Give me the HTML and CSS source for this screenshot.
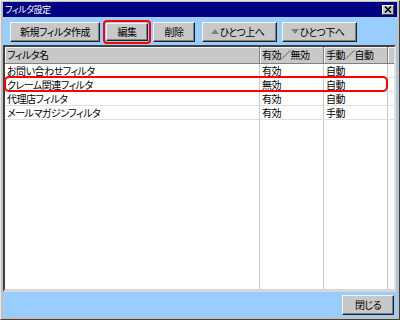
FILE: index.html
```html
<!DOCTYPE html>
<html lang="ja">
<head>
<meta charset="utf-8">
<title>フィルタ設定</title>
<link rel="stylesheet" href="styles.css">
</head>
<body>
<div class="window">
  <div class="titlebar">
    <span class="title">フィルタ設定</span>
    <span class="close-x"><svg width="8" height="7" viewBox="0 0 8 7"><path d="M1 0.5 L7 6.5 M7 0.5 L1 6.5" stroke="#000" stroke-width="1.6"/></svg></span>
  </div>
  <div class="content">
    <div class="toolbar">
      <button class="btn btn-new">新規フィルタ作成</button>
      <span class="mark"><button class="btn btn-edit">編集</button></span>
      <button class="btn btn-del">削除</button>
      <button class="btn btn-move btn-up"><span class="tri tri-up"></span>ひとつ上へ</button>
      <button class="btn btn-move btn-down"><span class="tri tri-down"></span>ひとつ下へ</button>
    </div>
    <div class="list">
      <div class="grid">
        <div class="hcell">フィルタ名</div>
        <div class="hcell">有効／無効</div>
        <div class="hcell">手動／自動</div>
        <div class="hcell hlast"></div>

        <div class="cell">お問い合わせフィルタ</div>
        <div class="cell">有効</div>
        <div class="cell">自動</div>
        <div class="cell clast"></div>

        <div class="cell">クレーム関連フィルタ</div>
        <div class="cell">無効</div>
        <div class="cell">自動</div>
        <div class="cell clast"></div>

        <div class="cell">代理店フィルタ</div>
        <div class="cell">有効</div>
        <div class="cell">自動</div>
        <div class="cell clast"></div>

        <div class="cell">メールマガジンフィルタ</div>
        <div class="cell">有効</div>
        <div class="cell">手動</div>
        <div class="cell clast"></div>

        <div class="fill"></div>
        <div class="fill"></div>
        <div class="fill"></div>
        <div class="fill clast"></div>
      </div>
      <div class="row-mark"></div>
    </div>
    <div class="footer">
      <button class="btn btn-close">閉じる</button>
    </div>
  </div>
</div>
</body>
</html>
```

FILE: styles.css
```css
html, body {
  margin: 0;
  padding: 0;
  background: #c0c0c0;
}

body {
  font-family: "Noto Sans CJK JP", "Noto Sans", sans-serif;
  font-size: 10px;
  font-feature-settings: "palt";
  letter-spacing: -0.5px;
  color: #000;
}

.window {
  width: 400px;
  height: 320px;
  box-sizing: border-box;
  background: #c0c0c0;
  border: 1px solid;
  border-color: #e8e8e8 #404040 #404040 #e8e8e8;
  padding: 1px 2px 2px 2px;
  display: flex;
  flex-direction: column;
}

.titlebar {
  height: 15px;
  background: #000080;
  display: flex;
  align-items: center;
  justify-content: space-between;
  padding: 0 3px 0 2px;
  flex: none;
}

.title {
  color: #fff;
  font-size: 9px;
  line-height: 15px;
}

.close-x {
  width: 10px;
  height: 8px;
  background: #c8c8c8;
  border: 1px solid;
  border-color: #fff #404040 #404040 #fff;
  display: flex;
  align-items: center;
  justify-content: center;
}

.close-x svg {
  display: block;
}

.content {
  flex: 1;
  background: #99ccff;
  display: flex;
  flex-direction: column;
  min-height: 0;
}

.toolbar {
  height: 28px;
  display: flex;
  align-items: center;
  padding: 1px 0 0 7px;
  box-sizing: border-box;
  flex: none;
}

.btn {
  font-family: "Noto Sans CJK JP", "Noto Sans", sans-serif;
  font-size: 10px;
  font-feature-settings: "palt";
  letter-spacing: -0.5px;
  color: #000;
  background: #c8c8c8;
  border: 1px solid;
  border-color: #f4f4f4 #202020 #202020 #f4f4f4;
  box-shadow: inset -1px -1px 0 #808080;
  padding: 0;
  margin: 0;
  height: 20px;
  display: flex;
  align-items: center;
  justify-content: center;
  box-sizing: border-box;
  line-height: 1;
}

.btn-new {
  width: 90px;
}

.mark {
  display: flex;
  border: 2px solid #ff0000;
  border-radius: 4px;
  padding: 1px;
  margin-left: 3px;
}

.btn-edit {
  width: 42px;
  height: 18px;
}

.btn-del {
  width: 42px;
  margin-left: 2px;
}

.btn-move {
  width: 75px;
  padding-right: 4px;
}

.btn-up {
  margin-left: 7px;
}

.btn-down {
  margin-left: 5px;
}

.tri {
  width: 0;
  height: 0;
  border-left: 4px solid transparent;
  border-right: 4px solid transparent;
  margin-right: 1px;
}

.tri-up {
  border-bottom: 5px solid #808080;
}

.tri-down {
  border-top: 5px solid #808080;
}

.list {
  flex: 1;
  position: relative;
  margin-right: 1px;
  background: #fff;
  border: 2px solid;
  border-color: #404040 #e0e0e0 #d8d8d8 #404040;
  border-bottom-width: 3px;
  display: flex;
  flex-direction: column;
  min-height: 0;
}

.grid {
  flex: 1;
  display: grid;
  grid-template-columns: 255px 64px 64px 1fr;
  grid-template-rows: 17px repeat(4, 14px) 1fr;
}

.hcell {
  background: #c8c8c8;
  border-right: 1px solid #808080;
  border-bottom: 1px solid #808080;
  box-shadow: inset 1px 1px 0 #f4f4f4;
  padding-left: 2px;
  line-height: 16px;
  white-space: nowrap;
  overflow: hidden;
}

.hlast {
  border-right: none;
}

.cell {
  border-right: 1px solid #c8c8c8;
  border-bottom: 1px solid #e0e0e0;
  padding-left: 2px;
  line-height: 14px;
  white-space: nowrap;
  overflow: hidden;
}

.fill {
  border-right: 1px solid #c8c8c8;
}

.clast {
  border-right: none;
}

.row-mark {
  position: absolute;
  left: -1px;
  top: 29px;
  width: 384px;
  height: 16px;
  box-sizing: border-box;
  border: 2px solid #ff0000;
  border-radius: 5px;
  pointer-events: none;
}

.footer {
  height: 25px;
  display: flex;
  align-items: center;
  justify-content: flex-end;
  padding-right: 3px;
  flex: none;
}

.btn-close {
  width: 52px;
}
```
